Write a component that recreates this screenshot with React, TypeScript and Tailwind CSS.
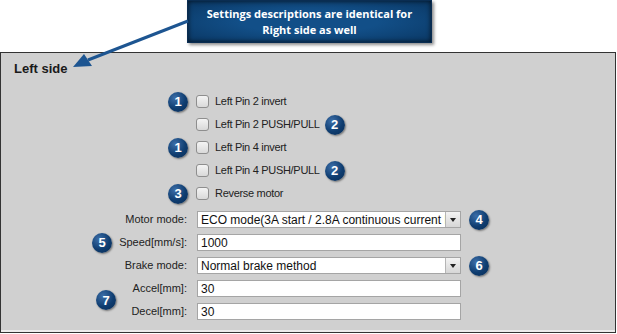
import React from 'react';

const Badge = ({ n }: { n: number }) => (
  <div className="w-[20px] h-[20px] shrink-0 rounded-full bg-[radial-gradient(circle_at_35%_30%,#3c6ea8_0%,#0f3d70_55%,#082a52_100%)] shadow-[1px_1px_2px_rgba(0,0,0,0.45)] flex items-center justify-center text-white text-[13px] font-bold leading-none">
    {n}
  </div>
);

const Checkbox = () => (
  <div className="w-[13px] h-[13px] shrink-0 rounded-[3px] border border-[#8e8e8e] bg-[linear-gradient(#f4f4f4,#d9d9d9)]" />
);

const CheckRow = ({ label, left, right }: { label: string; left?: number; right?: number }) => (
  <div className="flex items-center h-[23px]">
    <div className="w-[195px] flex justify-end pr-[8px]">{left && <Badge n={left} />}</div>
    <Checkbox />
    <span className="ml-[6px] text-[11px] tracking-[-0.3px] text-[#222]">{label}</span>
    {right && (
      <div className="ml-[5px]">
        <Badge n={right} />
      </div>
    )}
  </div>
);

const TextBox = ({ value }: { value: string }) => (
  <div className="w-[264px] h-[17px] border border-[#a5a5a5] bg-white flex items-center pl-[3px] text-[12px] text-[#111] overflow-hidden whitespace-nowrap">
    {value}
  </div>
);

const SelectBox = ({ value }: { value: string }) => (
  <div className="w-[264px] h-[17px] border border-[#a5a5a5] bg-white flex items-center text-[12px] text-[#111]">
    <div className="flex-1 min-w-0 pl-[3px] overflow-hidden whitespace-nowrap">{value}</div>
    <div className="w-[15px] h-[15px] shrink-0 bg-[linear-gradient(#f3f3f3,#d6d6d6)] border-l border-[#b5b5b5] flex items-center justify-center">
      <div className="w-0 h-0 border-l-[3px] border-r-[3px] border-t-[4px] border-l-transparent border-r-transparent border-t-[#222]" />
    </div>
  </div>
);

const FormRow = ({ label, children, left, right }: { label: string; children: React.ReactNode; left?: number; right?: number }) => (
  <div className="flex items-center h-[23px]">
    <div className="w-[186px] flex items-center justify-end gap-[7px] text-[11px] text-[#222]">
      {left && <Badge n={left} />}
      <span>{label}</span>
    </div>
    <div className="ml-[10px]">{children}</div>
    {right && (
      <div className="ml-[8px]">
        <Badge n={right} />
      </div>
    )}
  </div>
);

const App = () => {
  return (
    <div className="relative w-[617px] h-[334px] bg-white overflow-hidden" style={{ fontFamily: '"Liberation Sans", Arial, sans-serif' }}>
      {/* callout */}
      <div className="h-[52px] pl-[187px]">
        <div
          className="w-[245px] h-[43px] bg-[radial-gradient(ellipse_at_center,#124f88_40%,#0a3763_100%)] shadow-[2px_2px_3px_rgba(0,0,0,0.45),inset_0_0_5px_rgba(0,0,0,0.7)] border border-[#0a2d52] flex flex-col items-center justify-center text-white text-[11px] font-bold leading-[16px]"
          style={{ fontFamily: '"Open Sans", sans-serif' }}
        >
          <span>Settings descriptions are identical for</span>
          <span>Right side as well</span>
        </div>
      </div>

      {/* panel */}
      <div className="w-[616px] h-[281px] border border-[#333] bg-[#d0d0d0] pt-[8px] shadow-[inset_0_-2px_0_#ececec]">
        <div className="pl-[13px] text-[13px] font-bold text-[#1a1a1a] leading-[16px]">Left side</div>
        <div className="mt-[13px]">
          <CheckRow label="Left Pin 2 invert" left={1} />
          <CheckRow label="Left Pin 2 PUSH/PULL" right={2} />
          <CheckRow label="Left Pin 4 invert" left={1} />
          <CheckRow label="Left Pin 4 PUSH/PULL" right={2} />
          <CheckRow label="Reverse motor" left={3} />
        </div>
        <div className="mt-[3px]">
          <FormRow label="Motor mode:" right={4}>
            <SelectBox value="ECO mode(3A start / 2.8A continuous current limit)" />
          </FormRow>
          <FormRow label="Speed[mm/s]:" left={5}>
            <TextBox value="1000" />
          </FormRow>
          <FormRow label="Brake mode:" right={6}>
            <SelectBox value="Normal brake method" />
          </FormRow>
          <div className="flex items-center">
            <div className="w-[115px] flex justify-end">
              <Badge n={7} />
            </div>
            <div>
              {['Accel[mm]:', 'Decel[mm]:'].map((l) => (
                <div key={l} className="flex items-center h-[23px]">
                  <div className="w-[71px] text-right text-[11px] text-[#222]">{l}</div>
                  <div className="ml-[10px]">
                    <TextBox value="30" />
                  </div>
                </div>
              ))}
            </div>
          </div>
        </div>
      </div>

      {/* arrow */}
      <svg className="absolute left-0 top-0 pointer-events-none" width="617" height="334">
        <line x1="188" y1="21" x2="88" y2="60" stroke="#1d5591" strokeWidth="3" />
        <polygon points="73,67 84,54 92,66" fill="#1d5591" />
      </svg>
    </div>
  );
};

export default App;
